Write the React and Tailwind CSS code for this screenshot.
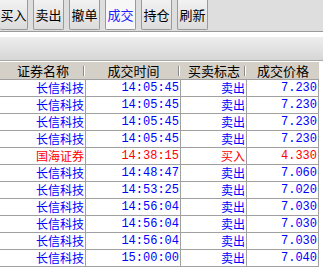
const TABS = [
  { label: '买入' },
  { label: '卖出' },
  { label: '撤单' },
  { label: '成交', active: true },
  { label: '持仓' },
  { label: '刷新' },
]

const ROWS = [
  ['长信科技', '14:05:45', '卖出', '7.230'],
  ['长信科技', '14:05:45', '卖出', '7.230'],
  ['长信科技', '14:05:45', '卖出', '7.230'],
  ['长信科技', '14:05:45', '卖出', '7.230'],
  ['国海证券', '14:38:15', '买入', '4.330', true],
  ['长信科技', '14:48:47', '卖出', '7.060'],
  ['长信科技', '14:53:25', '卖出', '7.020'],
  ['长信科技', '14:56:04', '卖出', '7.030'],
  ['长信科技', '14:56:04', '卖出', '7.030'],
  ['长信科技', '14:56:04', '卖出', '7.030'],
  ['长信科技', '15:00:00', '卖出', '7.040'],
]

const CJK = { fontFamily: '"SimSun","Noto Sans CJK SC",sans-serif' }
const MONO = { fontFamily: '"Liberation Mono","Noto Sans CJK SC",monospace' }

// ── Sub-components ────────────────────────────────────────────────────────────

function Tab({ label, active, first }) {
  return (
    <div
      className={`h-[30px] shrink-0 flex items-center justify-center border border-t-0 border-[#9a9a9a] rounded-b-[2px] text-[13px] ${
        first ? 'w-[28px] border-l-0' : 'w-[31px]'
      } ${active ? 'bg-[#f7f7f7] text-[#2020ff]' : 'bg-gradient-to-b from-[#f2f2f2] to-[#dcdcdc] text-black'}`}
      style={CJK}
    >
      {label}
    </div>
  )
}

function HeadCell({ children, sep }) {
  return (
    <div className="relative h-[17px] flex items-center justify-center text-[13px] text-black" style={CJK}>
      {children}
      {sep && <span className="absolute right-[1px] top-[4px] h-[10px] border-l border-[#8a8a8a] border-r border-r-white" />}
    </div>
  )
}

function Cell({ children, red, mono }) {
  return (
    <div
      className={`h-[17px] flex items-center justify-end pr-[1px] border-r border-b border-[#a0a0a0] text-[12px] leading-none ${
        red ? 'text-[#ff0000]' : 'text-[#0000ff]'
      }`}
      style={mono ? MONO : CJK}
    >
      {children}
    </div>
  )
}

// ── Main component ────────────────────────────────────────────────────────────

export default function App() {
  return (
    <div className="w-[323px] h-[270px] overflow-hidden bg-white">
      {/* Toolbar tabs */}
      <div className="h-[32px] bg-[#dedede] border-b border-[#9a9a9a] flex gap-[5px]">
        {TABS.map((t, i) => (
          <Tab key={t.label} label={t.label} active={t.active} first={i === 0} />
        ))}
      </div>

      <div className="h-[5px] bg-white" />
      <div className="h-[24px] bg-gradient-to-b from-[#eeeeee] to-[#d6d6d6] border-b border-[#a8a8a8]" />
      <div className="h-[1px] bg-white" />

      {/* Table */}
      <div className="w-[319px]">
        <div className="grid grid-cols-[86px_95px_66px_72px] bg-[#d4d0c8] border-b border-[#a0a0a0]">
          <HeadCell sep>证券名称</HeadCell>
          <HeadCell sep>成交时间</HeadCell>
          <HeadCell sep>买卖标志</HeadCell>
          <HeadCell>成交价格</HeadCell>
        </div>
        <div className="grid grid-cols-[86px_95px_66px_72px]">
          {ROWS.map((r, i) => (
            <div key={i} className="contents">
              <Cell red={r[4]}>{r[0]}</Cell>
              <Cell red={r[4]} mono>{r[1]}</Cell>
              <Cell red={r[4]}>{r[2]}</Cell>
              <Cell red={r[4]} mono>{r[3]}</Cell>
            </div>
          ))}
        </div>
      </div>
    </div>
  )
}
